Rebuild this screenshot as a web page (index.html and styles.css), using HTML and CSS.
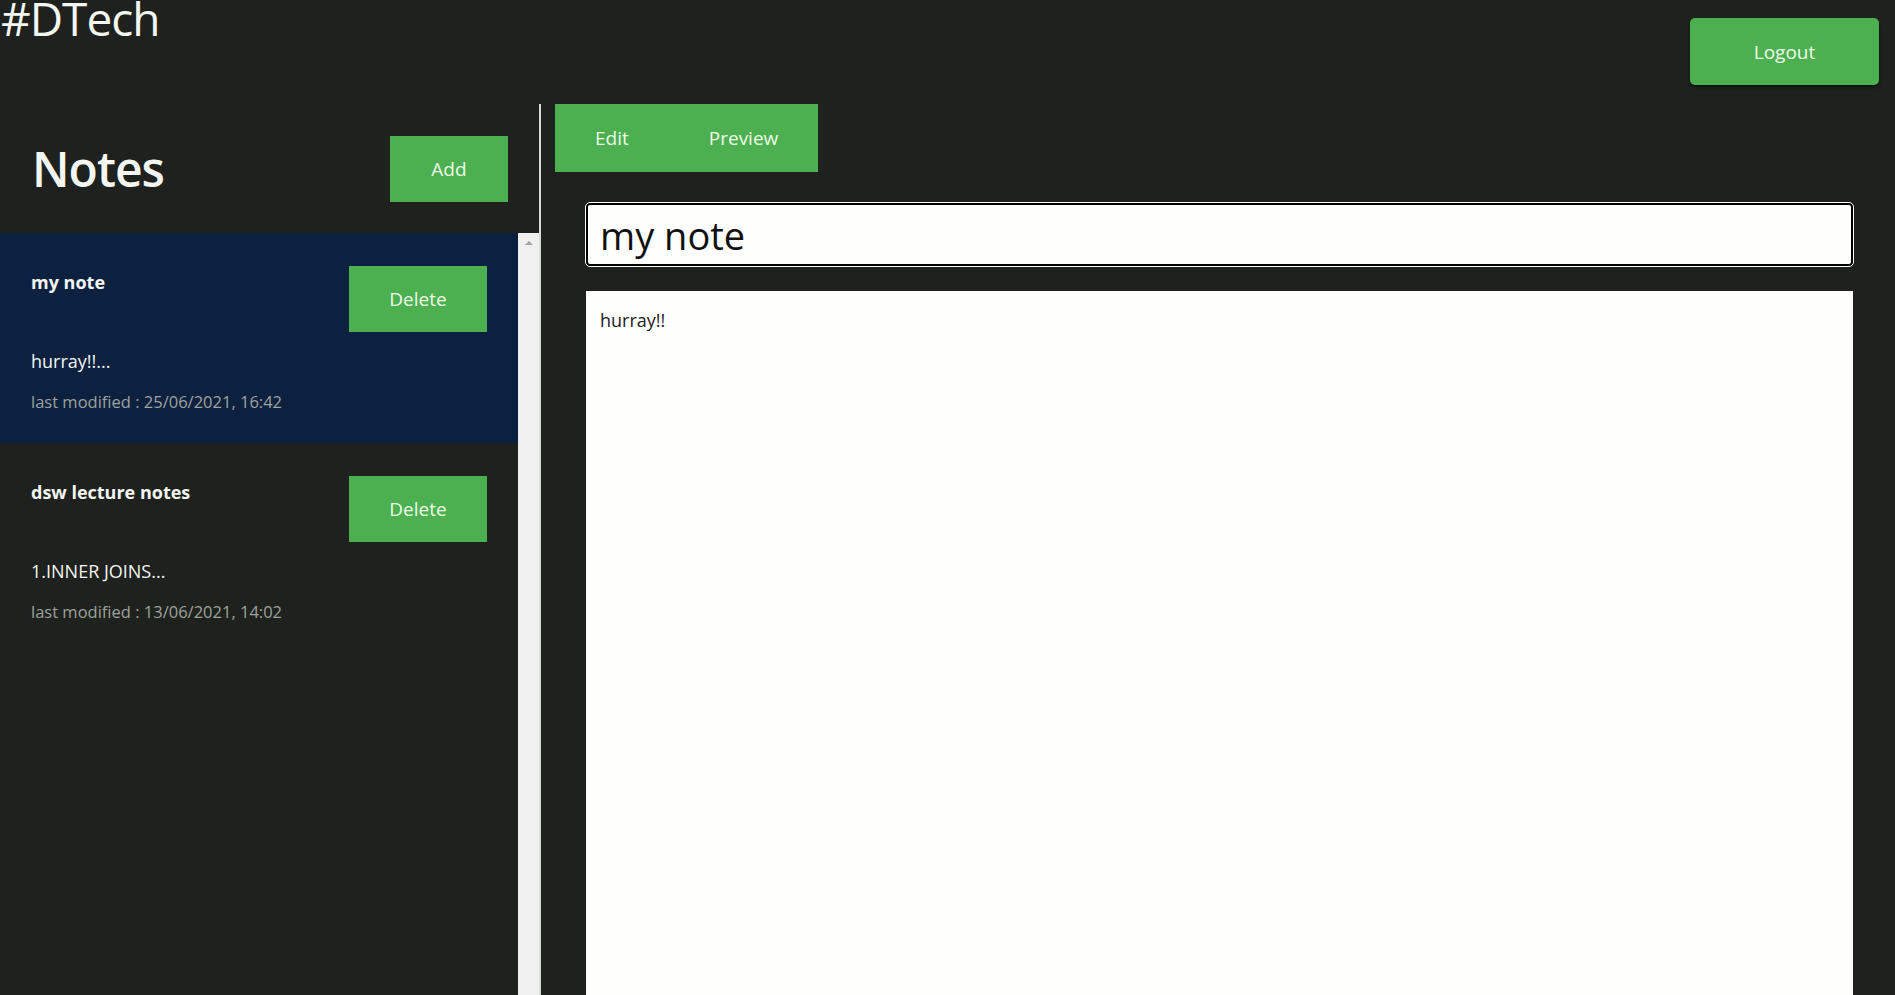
FILE: index.html
```html
<!DOCTYPE html>
<html lang="en">
<head>
    <meta charset="UTF-8">
    <meta name="viewport" content="width=device-width, initial-scale=1.0">
    <title>#DTech Notes</title>
    <link rel="stylesheet" href="styles.css">
</head>
<body>
    <header class="topbar">
        <h1 class="brand">#DTech</h1>
        <button class="btn logout-button">Logout</button>
    </header>

    <main class="workspace">
        <aside class="sidebar">
            <div class="sidebar-head">
                <h2>Notes</h2>
                <button class="btn add-button">Add</button>
            </div>
            <div class="note-scroll">
                <ul class="note-list">
                    <li class="note-item active">
                        <div class="note-row">
                            <strong class="note-title">my note</strong>
                            <button class="btn delete-button">Delete</button>
                        </div>
                        <p class="note-preview">hurray!!...</p>
                        <small class="note-date">last modified : 25/06/2021, 16:42</small>
                    </li>
                    <li class="note-item">
                        <div class="note-row">
                            <strong class="note-title">dsw lecture notes</strong>
                            <button class="btn delete-button">Delete</button>
                        </div>
                        <p class="note-preview">1.INNER JOINS...</p>
                        <small class="note-date">last modified : 13/06/2021, 14:02</small>
                    </li>
                </ul>
                <div class="scrollbar">
                    <span class="scroll-arrow"></span>
                </div>
            </div>
        </aside>

        <section class="editor">
            <div class="tabs">
                <button class="tab">Edit</button>
                <button class="tab">Preview</button>
            </div>
            <div class="fields">
                <input type="text" class="title-input" value="my note" autofocus>
                <textarea class="body-input">hurray!!</textarea>
            </div>
        </section>
    </main>
</body>
</html>
```

FILE: styles.css
```css
* {
    box-sizing: border-box;
}

html, body {
    height: 100%;
}

body {
    font-family: "Open Sans", Arial, sans-serif;
    margin: 0;
    padding: 0;
    background-color: #1e211d;
    color: #f4f6f2;
    display: flex;
    flex-direction: column;
    overflow: hidden;
}

.btn {
    background-color: #4caf50;
    color: #eefbe8;
    border: none;
    font-family: inherit;
    font-size: 19px;
    cursor: pointer;
}

.btn:hover {
    background-color: #43a047;
}

/* top bar */
.topbar {
    height: 104px;
    display: flex;
    justify-content: space-between;
    align-items: flex-start;
    flex-shrink: 0;
}

.brand {
    margin: 0 0 0 1px;
    font-size: 46px;
    font-weight: 400;
    line-height: 0.8;
    letter-spacing: -1px;
}

.logout-button {
    width: 189px;
    height: 67px;
    margin: 18px 16px 0 0;
    border-radius: 5px;
    box-shadow: 0 2px 3px rgba(0, 0, 0, 0.5);
}

/* layout */
.workspace {
    flex: 1;
    display: flex;
    min-height: 0;
}

.sidebar {
    width: 541px;
    border-right: 2px solid #d9dcd6;
    display: flex;
    flex-direction: column;
    flex-shrink: 0;
}

.sidebar-head {
    height: 129px;
    display: flex;
    justify-content: space-between;
    align-items: center;
    padding: 0 31px 0 32px;
}

.sidebar-head h2 {
    margin: 0;
    font-size: 48px;
    font-weight: 600;
    letter-spacing: -1px;
}

.add-button {
    width: 118px;
    height: 66px;
}

.note-scroll {
    flex: 1;
    display: flex;
    min-height: 0;
}

.note-list {
    list-style: none;
    margin: 0;
    padding: 0;
    flex: 1;
}

.scrollbar {
    width: 21px;
    background-color: #f0f0f0;
    display: flex;
    justify-content: center;
    padding-top: 8px;
}

.scroll-arrow {
    width: 0;
    height: 0;
    border-left: 4px solid transparent;
    border-right: 4px solid transparent;
    border-bottom: 4px solid #a3a3a3;
}

/* notes */
.note-item {
    height: 210px;
    padding: 33px 31px 0 31px;
}

.note-item.active {
    background-color: #0c213f;
}

.note-row {
    display: flex;
    justify-content: space-between;
    align-items: flex-start;
}

.note-title {
    display: block;
    margin-top: 2px;
    font-size: 18px;
    font-weight: 700;
    line-height: 28px;
}

.delete-button {
    width: 138px;
    height: 66px;
}

.note-preview {
    margin: 17px 0 0;
    font-size: 18px;
    line-height: 25px;
}

.note-date {
    display: block;
    margin-top: 15px;
    font-size: 16.5px;
    line-height: 25px;
    color: #9ea39c;
}

/* editor */
.editor {
    flex: 1;
    display: flex;
    flex-direction: column;
    min-width: 0;
}

.tabs {
    display: flex;
    align-self: flex-start;
    margin-left: 14px;
    background-color: #4caf50;
}

.tab {
    height: 68px;
    padding: 0 40px;
    background: none;
    border: none;
    color: #eefbe8;
    font-family: inherit;
    font-size: 19px;
    cursor: pointer;
}

.fields {
    flex: 1;
    display: flex;
    flex-direction: column;
    gap: 25px;
    padding: 31px 42px 0 45px;
}

.title-input {
    height: 63px;
    width: 100%;
    padding: 0 12px;
    border: 2px solid #000;
    border-radius: 4px;
    outline: 1px solid #fff;
    background-color: #fefffd;
    color: #111;
    font-family: inherit;
    font-size: 38px;
}

.body-input {
    flex: 1;
    width: 100%;
    padding: 17px 14px;
    border: none;
    border-radius: 0;
    resize: none;
    background-color: #fefffd;
    color: #222;
    font-family: inherit;
    font-size: 18px;
}
```
